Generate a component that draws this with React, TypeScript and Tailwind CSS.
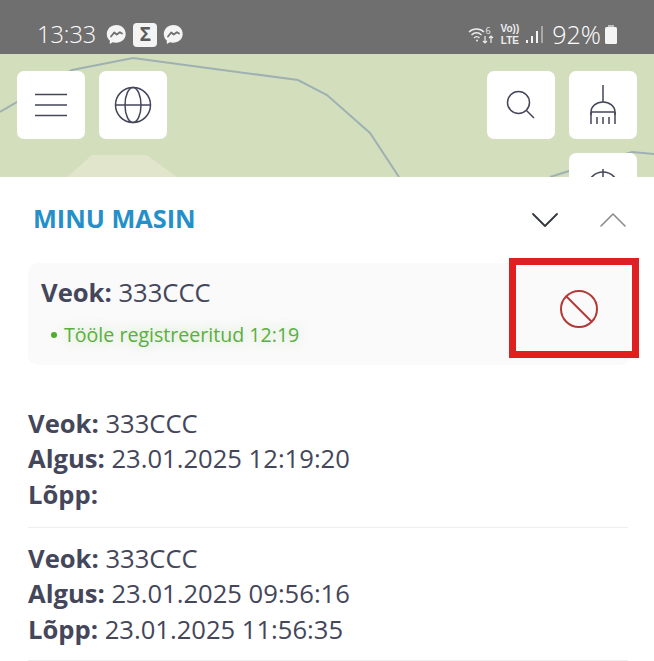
import React from 'react';
import { ChevronDown, ChevronUp } from 'lucide-react';

const FONT = "font-['Open_Sans',sans-serif]";

const TRIPS = [
  { veok: '333CCC', algus: '23.01.2025 12:19:20', lopp: '' },
  { veok: '333CCC', algus: '23.01.2025 09:56:16', lopp: '23.01.2025 11:56:35' },
];

function MessengerIcon() {
  return (
    <svg width="21" height="21" viewBox="0 0 21 21">
      <path d="M10.5 1C5 1 .8 4.900.8 10c0 2.700 1.100 5 3 6.600V20l3-1.700c1 .3 2.100.5 3.200.5 5.500 0 9.700-3.900 9.700-8.800S16 1 10.500 1z" fill="#f4f4f4" />
      <path d="M5 12.500l3.200-4 2.500 2 3.200-2.300 2.100 1.300" fill="none" stroke="#6f6f6f" strokeWidth="1.800" strokeLinejoin="round" strokeLinecap="round" />
    </svg>
  );
}

function StatusBar() {
  return (
    <div className="flex h-[54px] shrink-0 items-center justify-between bg-[#6f6f6f] pl-[37px] pr-[36px] pt-[19px] pb-[4px] text-white">
      <div className="flex items-center">
        <span className="mr-[10px] text-[23.500px] font-light">13:33</span>
        <MessengerIcon />
        <div className="mx-[6px] flex h-[24px] w-[24px] items-center justify-center rounded-[4px] bg-[#f4f4f4] text-[19px] leading-none font-bold text-[#5b5b5b]">Σ</div>
        <MessengerIcon />
      </div>
      <div className="flex items-center">
        <svg width="27" height="20" viewBox="0 0 27 20" className="mr-[6px]" fill="none" stroke="#ececec">
          <path d="M1 7c4-4 11-4 15 0" strokeWidth="1.300" />
          <path d="M3.500 10c3-3 7-3 10 0" strokeWidth="1.300" />
          <path d="M6 13c2-2 3.500-2 5.500 0" strokeWidth="1.300" />
          <circle cx="9" cy="15.500" r="1" fill="#ececec" stroke="none" />
          <text x="17.500" y="8.500" fontSize="9" fill="#ececec" stroke="none" fontFamily="Open Sans">6</text>
          <path d="M17 11v7m-2-2l2 2 2-2M23 18v-7m-2 2l2-2 2 2" strokeWidth="1.200" />
        </svg>
        <div className="mr-[7px] flex flex-col items-center font-['Liberation_Sans',sans-serif] text-[10px] leading-[11.500px] font-bold text-[#ececec]">
          <span>Vo))</span>
          <span>LTE</span>
        </div>
        <svg width="17" height="20" viewBox="0 0 17 20" className="mr-[9px]">
          <rect x="0" y="15" width="2" height="3" fill="#f4f4f4" />
          <rect x="5" y="11" width="2" height="7" fill="#f4f4f4" />
          <rect x="10" y="6" width="2" height="12" fill="#f4f4f4" />
          <rect x="15" y="1" width="2" height="17" fill="#a8a8a8" />
        </svg>
        <span className="text-[25px] font-light">92%</span>
        <svg width="14" height="19" viewBox="0 0 14 19" className="ml-[3px]">
          <rect x="4" y="0" width="6" height="3" fill="#bdbdbd" />
          <rect x="1" y="2" width="12" height="17" rx="1.500" fill="#f4f4f4" />
        </svg>
      </div>
    </div>
  );
}

function MapButton({ children }: { children: React.ReactNode }) {
  return <button className="flex h-[68px] w-[68px] shrink-0 items-center justify-center rounded-[7px] bg-white text-[#44465a]">{children}</button>;
}

function MapArea() {
  return (
    <div className="relative h-[123px] shrink-0 overflow-hidden bg-[#d3dfbc]">
      <svg className="absolute inset-0" width="654" height="123" viewBox="0 54 654 123" fill="none">
        <path d="M0 112 L72 70 L133 58 L298 80 L327 95 L370 133 L399 177" stroke="#9fb0b2" strokeWidth="2" />
        <path d="M550 177 L569 171 L632 152 L654 154" stroke="#9fb0b2" strokeWidth="2" />
        <path d="M67 177 L92 155 L147 155 L177 177 Z" fill="#e1e5cb" />
      </svg>
      <div className="relative flex justify-between px-[17px] pt-[17px]">
        <div className="flex gap-[14px]">
          <MapButton>
            <svg width="34" height="24" viewBox="0 0 34 24" fill="none" stroke="currentColor" strokeWidth="1.500">
              <path d="M1 1.500h32M1 12h32M1 22.500h32" />
            </svg>
          </MapButton>
          <MapButton>
            <svg width="38" height="38" viewBox="0 0 38 38" fill="none" stroke="currentColor" strokeWidth="1.500">
              <circle cx="19" cy="19" r="17.500" />
              <ellipse cx="19" cy="19" rx="8" ry="17.500" />
              <path d="M1.500 19h35" />
            </svg>
          </MapButton>
        </div>
        <div className="flex gap-[14px]">
          <MapButton>
            <svg width="30" height="30" viewBox="0 0 30 30" fill="none" stroke="currentColor" strokeWidth="1.500">
              <circle cx="12.500" cy="12.500" r="11" />
              <path d="M20.500 20.500L28 28" />
            </svg>
          </MapButton>
          <div className="flex flex-col gap-[14px]">
            <MapButton>
              <svg width="26" height="40" viewBox="0 0 26 40" fill="none" stroke="currentColor" strokeWidth="1.500">
                <path d="M13 0v17" />
                <path d="M1 30v-3a12 10 0 0 1 24 0v3" />
                <path d="M1 27h24" />
                <path d="M1 27v12M7 32v7M13 32v7M19 32v7M25 27v12" />
              </svg>
            </MapButton>
            <MapButton>
              <svg width="40" height="40" viewBox="0 0 40 40" fill="none" stroke="currentColor" strokeWidth="1.500">
                <circle cx="20" cy="20" r="15" />
                <path d="M20 2v36M2 20h36" />
              </svg>
            </MapButton>
          </div>
        </div>
      </div>
    </div>
  );
}

function Field({ label, value }: { label: string; value: string }) {
  return (
    <div className="h-[35.500px] text-[25.600px] leading-[35.500px] text-[#44465a]">
      <span className="font-bold">{label}:</span> {value}
    </div>
  );
}

function BlockIcon() {
  return (
    <svg width="38" height="38" viewBox="0 0 38 38" fill="none" stroke="#b23a36" strokeWidth="2">
      <circle cx="19" cy="19" r="18" />
      <path d="M6.500 6.500l25 25" />
    </svg>
  );
}

export default function App() {
  return (
    <div className={`flex h-[661px] w-[654px] flex-col overflow-hidden bg-white ${FONT}`}>
      <StatusBar />
      <MapArea />
      <div className="min-h-0 flex-1 overflow-hidden rounded-t-[16px] bg-white">
        <div className="flex h-[86px] items-center justify-between pl-[33px] pr-[17px]">
          <h2 className="pb-[2px] text-[25.300px] font-bold text-[#2490c9]">MINU MASIN</h2>
          <div className="flex items-center gap-[20px]">
            <ChevronDown size={48} strokeWidth={0.900} className="text-[#33353f]" />
            <ChevronUp size={48} strokeWidth={0.800} className="text-[#8c8c8c]" />
          </div>
        </div>
        <div className="relative ml-[28px] mr-[24px] h-[102px] rounded-[10px] bg-[#fafafa] pl-[13px] pt-[12px]">
          <Field label="Veok" value="333CCC" />
          <div className="mt-[10px] flex items-center text-[19.600px] leading-[28px] text-[#5bae3f] [text-shadow:0_0_12px_rgba(91,174,63,0.35)]">
            <span className="ml-[10px] mr-[7px] h-[6px] w-[6px] rounded-full bg-[#4cae2c]" />
            Tööle registreeritud 12:19
          </div>
          <button className="absolute left-[481px] top-[-5px] flex h-[100px] w-[130px] items-center justify-center border-[7px] border-[#e02020] pl-[10px] pt-[2px]">
            <BlockIcon />
          </button>
        </div>
        <div className="mx-[26px] mt-[26px] pl-[2px]">
          {TRIPS.map((t, i) => (
            <div key={i} className={`border-b border-[#eeeeee] ${i === 0 ? 'pt-[14.500px] pb-[14.500px]' : 'pt-[13px] pb-[13px]'}`}>
              <Field label="Veok" value={t.veok} />
              <Field label="Algus" value={t.algus} />
              <Field label="Lõpp" value={t.lopp} />
            </div>
          ))}
        </div>
      </div>
    </div>
  );
}
